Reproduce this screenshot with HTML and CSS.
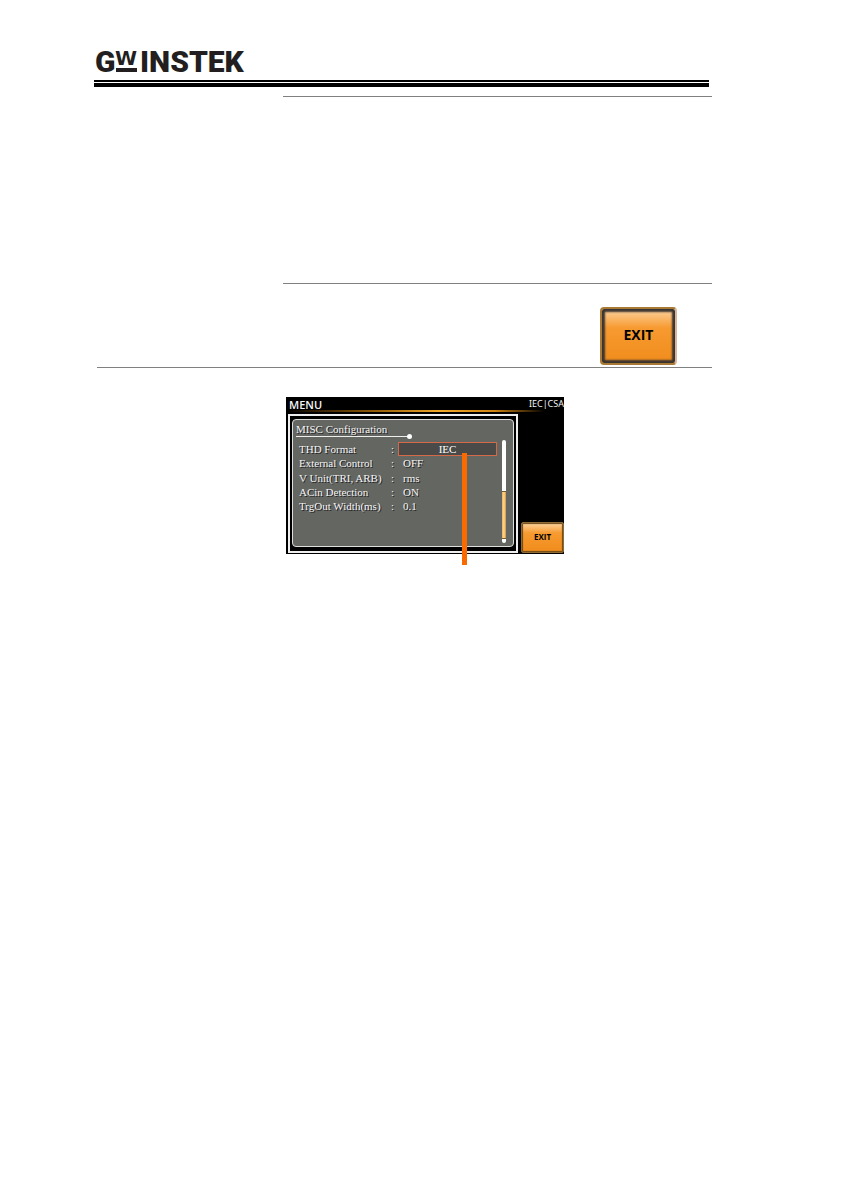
FILE: index.html
```
<!DOCTYPE html>
<html lang="en">
<head>
    <meta charset="UTF-8">
    <meta name="viewport" content="width=device-width, initial-scale=1.0">
    <title>GW INSTEK - MISC Configuration</title>
    <link rel="stylesheet" href="styles.css">
</head>
<body>

    <header class="page-header">
        <svg class="logo" viewBox="0 0 160 40" role="img" aria-label="GW INSTEK">
            <text class="logo-text" x="0" y="32">G</text>
            <text class="logo-w" x="20" y="25">W</text>
            <rect x="21" y="28" width="21" height="4" />
            <text class="logo-text" x="45" y="32">INSTEK</text>
        </svg>
        <div class="double-rule"></div>
    </header>

    <main>
        <section class="step step-empty"></section>

        <section class="step-exit">
            <button class="exit exit-large">EXIT</button>
        </section>

        <section class="figure">
            <div class="screen">
                <div class="screen-top">
                    <span class="screen-title">MENU</span>
                    <span class="screen-mode">IEC|CSA</span>
                </div>
                <div class="screen-line"></div>
                <div class="screen-body">
                    <div class="frame">
                        <div class="panel">
                            <h2>MISC Configuration</h2>
                            <div class="title-line"></div>
                            <div class="settings">
                                <label for="thd">THD Format</label><span>:</span>
                                <select id="thd">
                                    <option>IEC</option>
                                    <option>CSA</option>
                                </select>
                                <span>External Control</span><span>:</span><span>OFF</span>
                                <span>V Unit(TRI, ARB)</span><span>:</span><span>rms</span>
                                <span>ACin Detection</span><span>:</span><span>ON</span>
                                <span>TrgOut Width(ms)</span><span>:</span><span>0.1</span>
                            </div>
                            <div class="scrollbar"><div class="thumb"></div></div>
                        </div>
                    </div>
                    <div class="soft-keys">
                        <button class="exit exit-small">EXIT</button>
                    </div>
                </div>
                <div class="callout"></div>
            </div>
        </section>
    </main>

</body>
</html>
```
FILE: styles.css
```
body {
    margin: 0;
    padding: 40px 130px 40px 94px;
    background: white;
    font-family: "Liberation Sans", Arial, sans-serif;
}

.page-header {
    margin-right: 3px;
}

.logo {
    display: block;
    width: 160px;
    height: 40px;
    margin-left: 1px;
    fill: #231f20;
}

.logo-text {
    font: 900 30px Roboto, sans-serif;
}

.logo-w {
    font: bold 20px "DejaVu Sans", sans-serif;
}

/* Thin line over a thick one */
.double-rule {
    height: 1px;
    border-top: 2px solid black;
    border-bottom: 4px solid black;
}

main {
    margin: 9px 0 0 3px;
}

.step {
    margin-left: 186px;
    border-top: 1px solid #808080;
    border-bottom: 1px solid #808080;
}

.step-empty {
    height: 186px;
}

.step-exit {
    display: flex;
    justify-content: flex-end;
    padding: 23px 35px 2px 0;
    border-bottom: 1px solid #808080;
}

.exit {
    box-sizing: border-box;
    padding: 0 0 3px;
    color: black;
    cursor: pointer;
    font-family: "Open Sans", sans-serif;
    font-weight: bold;
    background: linear-gradient(#fcd3a0, #f79a30 35%, #f08c1c);
}

.exit-large {
    width: 77px;
    height: 58px;
    border: 2px solid #a87a36;
    border-right-color: #d9b49a;
    border-radius: 4px;
    box-shadow: inset 0 0 2px 3px #3a3430;
    font-size: 14px;
}

.exit-small {
    width: 43px;
    height: 31px;
    border: 1px solid #8f6a34;
    border-radius: 2px;
    box-shadow: inset 0 0 1px 1px #6a4818;
    font-size: 8px;
}

.figure {
    padding: 29px 0 0 189px;
}

.screen {
    position: relative;
    width: 278px;
    background: black;
    color: #f4f4f4;
    font-family: "Liberation Serif", serif;
}

.screen-top {
    display: flex;
    justify-content: space-between;
    height: 13px;
    padding-left: 3px;
    line-height: 15px;
}

.screen-line {
    height: 2px;
    background: linear-gradient(to right, black, #8a5606 30%, #f0a828 55%, #d08410 75%, black 93%);
}

.screen-title {
    font-family: "Open Sans", sans-serif;
    font-size: 11px;
    font-weight: 600;
}

.screen-mode {
    font-family: "Noto Sans", sans-serif;
    font-size: 9px;
    line-height: 13px;
}

.screen-body {
    display: flex;
    padding: 2px 0 1px 2px;
}

.frame {
    flex: 1;
    padding: 3px 2px 4px;
    border: 2px solid #eee;
}

.panel {
    position: relative;
    box-sizing: border-box;
    height: 128px;
    padding: 3px 8px 0 3px;
    background: #646662;
    border: 1px solid #ddd;
    border-radius: 4px;
    text-shadow: 1px 1px 0 #222;
    font-size: 11px;
}

.panel h2 {
    margin: 0;
    font-size: 11px;
    font-weight: normal;
    line-height: 12px;
}

.title-line {
    position: relative;
    width: 115px;
    margin-top: 1px;
    border-top: 1px solid #eee;
}

/* Dot at the end of the title line */
.title-line::after {
    content: "";
    position: absolute;
    right: -1px;
    top: -3px;
    width: 5px;
    height: 5px;
    border-radius: 50%;
    background: white;
}

.settings {
    display: grid;
    grid-template-columns: 92px 12px 98px;
    align-content: space-between;
    align-items: center;
    height: 71px;
    margin-top: 5px;
    padding-left: 3px;
    line-height: 14px;
}

.settings select {
    appearance: none;
    box-sizing: border-box;
    width: 99px;
    height: 14px;
    margin-left: -5px;
    padding: 0;
    color: white;
    background: #4a4a48;
    border: 1px solid #d4694a;
    border-radius: 0;
    font: 11px "Liberation Serif", serif;
    text-align-last: center;
}

.scrollbar {
    position: absolute;
    right: 7px;
    top: 20px;
    display: flex;
    flex-direction: column;
    justify-content: flex-end;
    box-sizing: border-box;
    width: 4px;
    height: 103px;
    padding-bottom: 4px;
    background: white;
    border-radius: 2px;
}

.thumb {
    height: 46px;
    background: linear-gradient(to right, #f0b050, #fbd9a0, #d8902c);
    border-top: 1px solid #7a5a2a;
    border-bottom: 1px solid #7a5a2a;
}

.soft-keys {
    display: flex;
    align-items: flex-end;
    margin-left: 3px;
}

/* Pointer from the selected value to its description */
.callout {
    position: absolute;
    left: 176px;
    top: 56px;
    width: 5px;
    height: 112px;
    background: #f96a00;
}
```
